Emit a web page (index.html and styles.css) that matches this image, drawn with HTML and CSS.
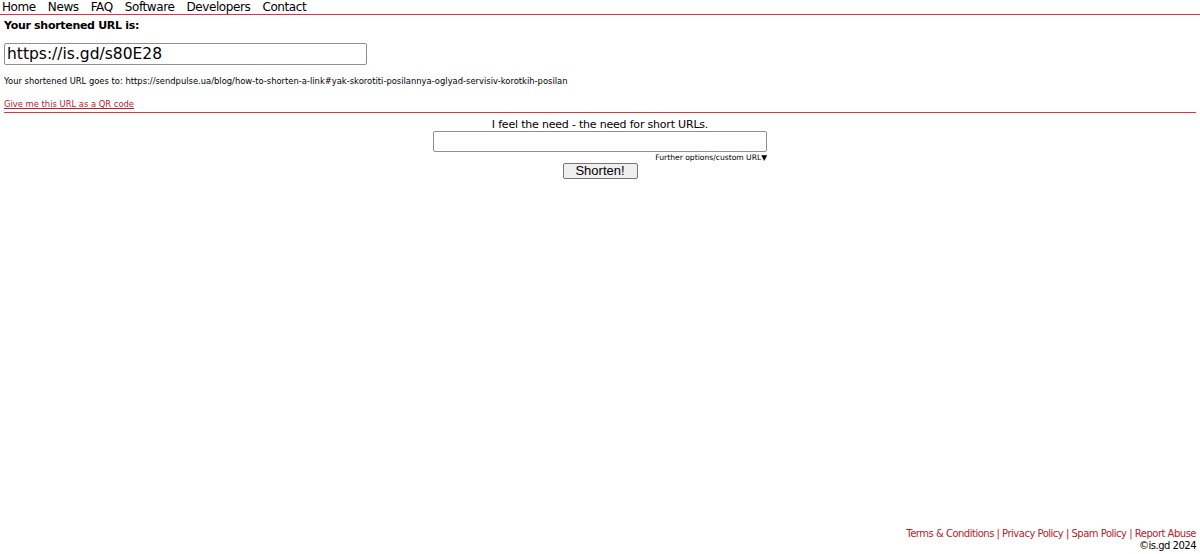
FILE: index.html
```html
<!DOCTYPE html>
<html lang="en">
<head>
    <meta charset="UTF-8">
    <meta name="viewport" content="width=device-width, initial-scale=1.0">
    <title>is.gd - a URL shortener</title>
    <link rel="stylesheet" href="styles.css">
</head>
<body>
    <div class="page">
        <div class="menu">
            <a href="#">Home</a>
            <a href="#">News</a>
            <a href="#">FAQ</a>
            <a href="#">Software</a>
            <a href="#">Developers</a>
            <a href="#">Contact</a>
        </div>

        <div class="result">
            <div class="result_title">Your shortened URL is:</div>
            <input type="text" class="short_url" value="https://is.gd/s80E28" readonly>
            <p class="goes_to">Your shortened URL goes to: https://sendpulse.ua/blog/how-to-shorten-a-link#yak-skorotiti-posilannya-oglyad-servisiv-korotkih-posilan</p>
            <a href="#" class="qr">Give me this URL as a QR code</a>
        </div>

        <form class="shorten">
            <div class="need">I feel the need - the need for short URLs.</div>
            <input type="text" class="url_box">
            <div class="options"><a href="#">Further options/custom URL</a>&#9660;</div>
            <button type="button" class="btn_shorten">Shorten!</button>
        </form>

        <div class="footer">
            <div class="links">
                <a href="#">Terms &amp; Conditions</a> <span class="sep">|</span>
                <a href="#">Privacy Policy</a> <span class="sep">|</span>
                <a href="#">Spam Policy</a> <span class="sep">|</span>
                <a href="#">Report Abuse</a>
            </div>
            <div>&copy;is.gd 2024</div>
        </div>
    </div>
</body>
</html>
```

FILE: styles.css
```css
body{
    margin:0;
    font-family: "DejaVu Sans", Verdana, sans-serif;
    color:#000;
    background:#fff;
}

.page{
    display:flex;
    flex-direction:column;
    min-height:100vh;
    box-sizing:border-box;
    padding-bottom:2px;
}

.menu{
    display:flex;
    gap:12px;
    padding:0 2px;
    height:14px;
    line-height:14px;
    font-size:12px;
    letter-spacing:-0.4px;
    border-bottom:1px solid #d9383a;
}

.menu a{
    color:#000;
    text-decoration:none;
}

.result{
    margin:0 4px;
    padding-top:4px;
    border-bottom:1px solid #d9383a;
    padding-bottom:1px;
}

.result_title{
    font-size:11px;
    font-weight:bold;
    line-height:14px;
    letter-spacing:-0.3px;
}

.short_url{
    display:block;
    margin-top:10px;
    width:363px;
    height:22px;
    box-sizing:border-box;
    border:1px solid #8f8f8f;
    border-radius:2px;
    padding:0 2px;
    font-family:"DejaVu Sans", Verdana, sans-serif;
    font-size:15.5px;
}

.goes_to{
    margin:11px 0 0;
    font-size:8.4px;
    line-height:10px;
}

.qr{
    display:inline-block;
    margin-top:13px;
    font-size:8.4px;
    line-height:10px;
    color:#b5222a;
}

.shorten{
    display:flex;
    flex-direction:column;
    align-items:center;
    margin-top:5px;
}

.need{
    font-size:11px;
    line-height:13px;
    letter-spacing:-0.2px;
}

.url_box{
    width:334px;
    height:21px;
    box-sizing:border-box;
    border:1px solid #8f8f8f;
    border-radius:2px;
    margin-top:0;
}

.options{
    width:334px;
    text-align:right;
    font-size:7.6px;
    line-height:11px;
}

.options a{
    color:#000;
    text-decoration:none;
}

.btn_shorten{
    width:75px;
    height:16px;
    padding:0;
    font-family:"Liberation Sans", Arial, sans-serif;
    font-size:13px;
    line-height:14px;
    background:#efefef;
    border:1px solid #767676;
    border-radius:2px;
}

.footer{
    margin-top:auto;
    text-align:right;
    padding-right:4px;
    font-size:10px;
    line-height:12px;
    letter-spacing:-0.5px;
}

.footer .links{
    color:#b5222a;
}

.footer a{
    color:#b5222a;
    text-decoration:none;
}
```
